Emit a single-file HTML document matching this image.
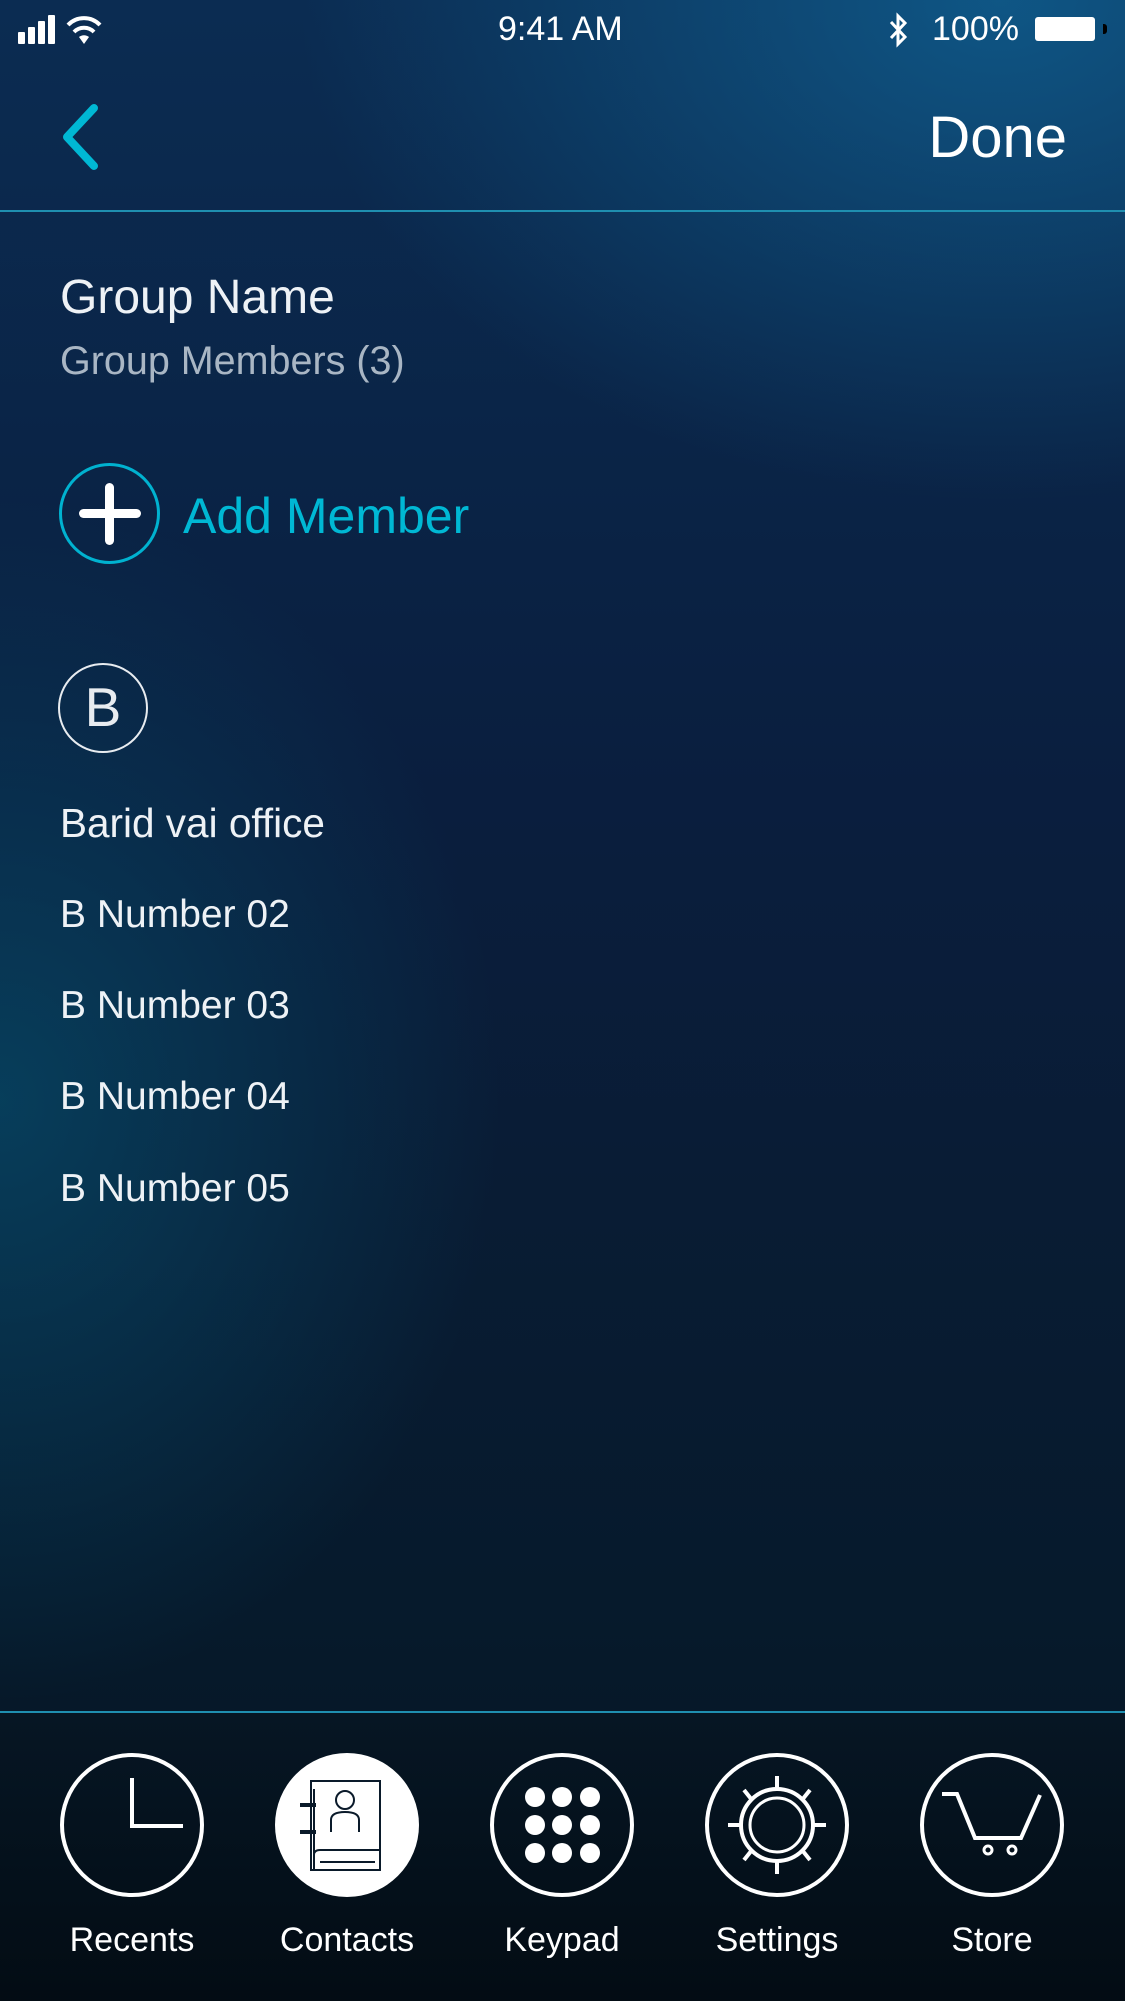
<!DOCTYPE html>
<html><head><meta charset="utf-8"><style>
*{margin:0;padding:0;box-sizing:border-box}
html,body{width:1125px;height:2001px;overflow:hidden}
body{position:relative;font-family:"Liberation Sans",sans-serif;color:#fff;
background:
radial-gradient(ellipse 700px 500px at 1000px 0px,rgba(16,100,150,.75),rgba(16,100,150,0) 100%),
radial-gradient(ellipse 500px 600px at 0px 1100px,rgba(6,70,100,.8),rgba(6,70,100,0) 100%),
linear-gradient(180deg,#0b2c52 0%,#0a1e3e 40%,#091c34 60%,#061a2c 80%,#051420 100%);}
.t{position:absolute;white-space:nowrap;line-height:1}
.line{position:absolute;left:0;width:1125px;height:2px;background:#1f8fb0}
.tab{position:absolute;left:0;top:1713px;width:1125px;height:288px;background:linear-gradient(180deg,#061624,#030c14)}
.lbl{position:absolute;font-size:34px;width:200px;text-align:center;top:1921px}
</style></head><body>
<svg style="position:absolute;left:18px;top:14px" width="110" height="32">
<rect x="0" y="18" width="7" height="12" rx="1" fill="#fff"/><rect x="10" y="13" width="7" height="17" rx="1" fill="#fff"/><rect x="20" y="7" width="7" height="23" rx="1" fill="#fff"/><rect x="30" y="1" width="7" height="29" rx="1" fill="#fff"/>
<path d="M66 30 L61 23 A8 8 0 0 1 71 23 Z" fill="#fff"/>
<path d="M56 18 A14 14 0 0 1 76 18" stroke="#fff" stroke-width="4" fill="none"/>
<path d="M50 11 A22 22 0 0 1 82 11" stroke="#fff" stroke-width="4" fill="none"/>
</svg>
<div class="t" style="left:498px;top:12px;font-size:34px">9:41 AM</div>
<svg style="position:absolute;left:888px;top:12px" width="22" height="36"><path d="M3 10 L17 25 L10 32 L10 4 L17 11 L3 26" stroke="#fff" stroke-width="3" fill="none"/></svg>
<div class="t" style="left:932px;top:12px;font-size:34px">100%</div>
<div style="position:absolute;left:1035px;top:17px;width:60px;height:24px;background:#fff;border-radius:3px"></div>
<div style="position:absolute;left:1103px;top:24px;width:4px;height:10px;background:#000;border-radius:0 3px 3px 0"></div>
<svg style="position:absolute;left:52px;top:100px" width="50" height="75"><path d="M42 8 L15 37 L42 66" stroke="#00b8d4" stroke-width="8" fill="none" stroke-linecap="round" stroke-linejoin="round"/></svg>
<div class="t" style="right:58px;top:109px;font-size:58px">Done</div>
<div class="line" style="top:210px"></div>
<div class="t" style="left:60px;top:274px;font-size:48px;color:#eef2f6">Group Name</div>
<div class="t" style="left:60px;top:342px;font-size:39.5px;color:#a9b6c4">Group Members (3)</div>
<div style="position:absolute;left:59px;top:463px;width:101px;height:101px;border:3px solid #00b2d0;border-radius:50%"></div>
<div style="position:absolute;left:79px;top:509px;width:62px;height:9px;background:#fff;border-radius:5px"></div>
<div style="position:absolute;left:105px;top:483px;width:9px;height:62px;background:#fff;border-radius:5px"></div>
<div class="t" style="left:183px;top:491px;font-size:50px;color:#00b8d4">Add Member</div>
<div style="position:absolute;left:58px;top:663px;width:90px;height:90px;border:2px solid #e8ecf0;border-radius:50%"></div>
<div class="t" style="left:58px;top:680px;width:90px;text-align:center;font-size:55px;color:#e8ecf0">B</div>
<div class="t" style="left:60px;top:803px;font-size:40.5px;color:#eef2f6">Barid vai office</div>
<div class="t" style="left:60px;top:895px;font-size:39px;color:#eef2f6">B Number 02</div>
<div class="t" style="left:60px;top:986px;font-size:39px;color:#eef2f6">B Number 03</div>
<div class="t" style="left:60px;top:1077px;font-size:39px;color:#eef2f6">B Number 04</div>
<div class="t" style="left:60px;top:1169px;font-size:39px;color:#eef2f6">B Number 05</div>
<div class="tab"></div>
<div class="line" style="top:1711px"></div>
<svg style="position:absolute;left:0;top:1700px" width="1125" height="250" fill="none" stroke="#fff">
<circle cx="132" cy="125" r="70" stroke-width="4"/>
<path d="M132 78 V126 H183" stroke-width="4"/>
<circle cx="347" cy="125" r="72" fill="#fff" stroke="none"/>
<g stroke="#0a1a2a" stroke-width="2">
<rect x="311" y="81" width="69" height="89"/>
<path d="M314 89 V170 M314 155 Q314 150 320 150 H380 M320 162 H375" />
<path d="M300 105 H316 M300 132 H316" stroke-width="4"/>
<circle cx="345" cy="100" r="9"/><path d="M331 132 V120 Q331 112 345 112 Q359 112 359 120 V132"/>
</g>
<g fill="#fff" stroke="none">
<circle cx="535" cy="97" r="10"/><circle cx="562" cy="97" r="10"/><circle cx="590" cy="97" r="10"/>
<circle cx="535" cy="125" r="10"/><circle cx="562" cy="125" r="10"/><circle cx="590" cy="125" r="10"/>
<circle cx="535" cy="153" r="10"/><circle cx="562" cy="153" r="10"/><circle cx="590" cy="153" r="10"/>
</g>
<circle cx="562" cy="125" r="70" stroke-width="4"/>
<circle cx="777" cy="125" r="70" stroke-width="4"/>
<circle cx="777" cy="125" r="36" stroke-width="4"/><circle cx="777" cy="125" r="27" stroke-width="3"/>
<path d="M777 76 V89 M777 161 V174 M728 125 H741 M813 125 H826 M744 90 L752 100 M810 90 L802 100 M744 160 L752 150 M810 160 L802 150" stroke-width="4"/>
<circle cx="992" cy="125" r="70" stroke-width="4"/>
<path d="M942 94 H957 L975 138 H1021 L1040 95" stroke-width="4"/>
<circle cx="988" cy="150" r="4" stroke-width="3"/><circle cx="1012" cy="150" r="4" stroke-width="3"/>
</svg>
<div class="lbl" style="left:32px">Recents</div>
<div class="lbl" style="left:247px">Contacts</div>
<div class="lbl" style="left:462px">Keypad</div>
<div class="lbl" style="left:677px">Settings</div>
<div class="lbl" style="left:892px">Store</div>
</body></html>
